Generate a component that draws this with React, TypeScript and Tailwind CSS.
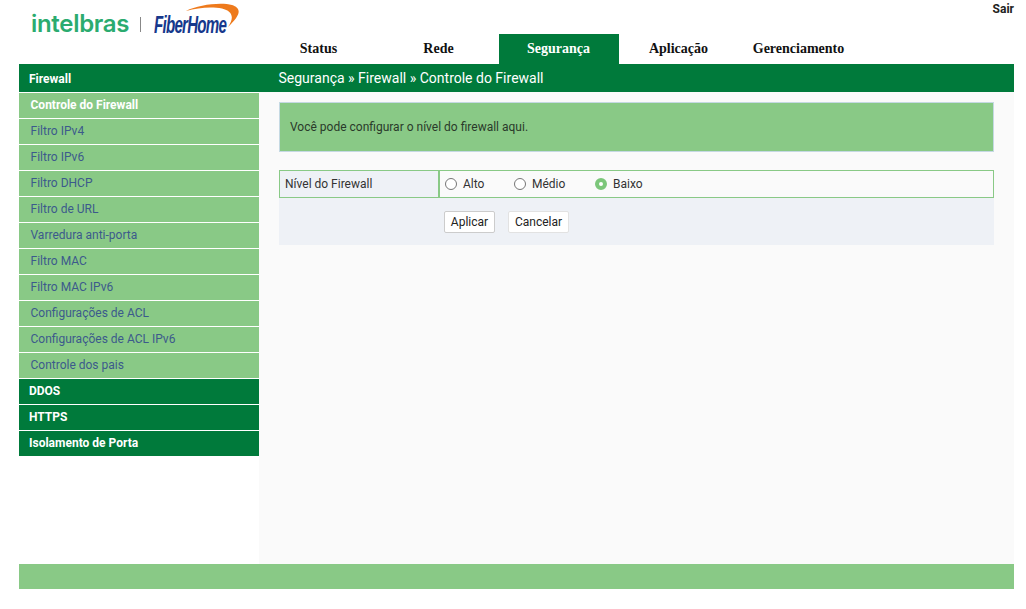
const tabs = ['Status', 'Rede', 'Segurança', 'Aplicação', 'Gerenciamento'];

const subItems = [
  'Controle do Firewall',
  'Filtro IPv4',
  'Filtro IPv6',
  'Filtro DHCP',
  'Filtro de URL',
  'Varredura anti-porta',
  'Filtro MAC',
  'Filtro MAC IPv6',
  'Configurações de ACL',
  'Configurações de ACL IPv6',
  'Controle dos pais',
];

const sections = ['DDOS', 'HTTPS', 'Isolamento de Porta'];

const levels = [
  { label: 'Alto', width: 'w-[69px]', checked: false },
  { label: 'Médio', width: 'w-[81px]', checked: false },
  { label: 'Baixo', width: 'w-[69px]', checked: true },
];

function Logo() {
  return (
    <div className="flex items-center h-[48px] pl-[12px] w-[240px]">
      <span className="font-['Inter',sans-serif] text-[24px] font-semibold leading-none tracking-[-0.3px] text-[#2bab6f]">intelbras</span>
      <span className="w-px h-[15px] bg-[#888] ml-[11px] mr-[13px] mt-[1px]"></span>
      <div className="relative w-[80px]">
        <span className="font-['Liberation_Sans',sans-serif] text-[24px] font-bold italic leading-none tracking-[-1.2px] text-[#16388c] block scale-x-[0.63] origin-left whitespace-nowrap mt-[1px]">FiberHome</span>
        <svg className="absolute left-[32px] top-[-9px]" width="56" height="26" viewBox="0 0 56 26">
          <path d="M0 8 C12 2 34 -1 46 2 C55 5 56 11 42 24 C49 14 46 8 36 5.5 C26 3.5 12 4.5 0 8 Z" fill="#ee7a1c" />
        </svg>
      </div>
    </div>
  );
}

export default function App() {
  return (
    <div className="w-[995px] ml-[19px] font-['Roboto',sans-serif] text-[12px]">
      <div className="h-[64px] flex relative">
        <Logo />
        <div className="flex items-end">
          {tabs.map((t) => (
            <div
              key={t}
              className={`w-[120px] h-[30px] flex items-center justify-center pb-[2px] pr-[1px] font-['Liberation_Serif',serif] font-bold text-[14px] ${t === 'Segurança' ? 'bg-[#007a3b] text-white' : 'text-[#111]'}`}
            >
              {t}
            </div>
          ))}
        </div>
        <a className="absolute right-0 top-0 font-bold text-[12px] text-[#222]">Sair</a>
      </div>

      <div className="flex">
        <div className="w-[240px] shrink-0">
          <div className="h-[29px] border-b border-white bg-[#007a3b] text-white font-bold flex items-center pl-[10px] pt-[1px]">Firewall</div>
          {subItems.map((s, i) => (
            <div
              key={s}
              className={`h-[26px] border-b border-white bg-[#89c986] flex items-center pl-[11.5px] pb-[1px] ${i === 0 ? 'text-white font-bold' : 'text-[#3c5a8c]'}`}
            >
              {s}
            </div>
          ))}
          {sections.map((s, i) => (
            <div
              key={s}
              className={`bg-[#007a3b] text-white font-bold flex items-center pl-[10px] pb-[1px] ${i < 2 ? 'h-[26px] border-b border-white' : 'h-[25px]'}`}
            >
              {s}
            </div>
          ))}
        </div>

        <div className="flex-1 flex flex-col">
          <div className="h-[28px] bg-[#007a3b] text-white text-[14px] flex items-center pl-[19.5px]">
            Segurança » Firewall » Controle do Firewall
          </div>
          <div className="h-[472px] bg-[#fafafa] pt-[10px] pl-[20px] pr-[20px]">
            <div className="h-[50px] bg-[#89c986] border border-[#c5d9e3] flex items-center pl-[10px] text-[#2a3a2a]">
              Você pode configurar o nível do firewall aqui.
            </div>
            <div className="mt-[18px] flex h-[28px]">
              <div className="w-[160px] bg-[#eef1f6] border border-[#89c986] flex items-center pl-[5px] text-[#333]">Nível do Firewall</div>
              <div className="flex-1 bg-[#fafafa] border border-[#89c986] flex items-center pl-[5px] text-[#333]">
                {levels.map((l) => (
                  <label key={l.label} className={`flex items-center ${l.width}`}>
                    <input
                      type="radio"
                      name="level"
                      defaultChecked={l.checked}
                      className="appearance-none w-[12px] h-[12px] rounded-full bg-white border border-[#767676] checked:border-[4px] checked:border-[#7cc67a] mr-[6px]"
                    />
                    {l.label}
                  </label>
                ))}
              </div>
            </div>
            <div className="h-[47px] bg-[#eef1f6] flex items-start pl-[165px] pt-[13px]">
              <button className="h-[22px] w-[51px] bg-white border border-[#ccc] rounded-[2px] text-[12px] text-[#222]">Aplicar</button>
              <button className="h-[22px] w-[61px] ml-[13px] bg-white border border-[#e2e2e2] rounded-[2px] text-[12px] text-[#222]">Cancelar</button>
            </div>
          </div>
        </div>
      </div>

      <div className="h-[25px] bg-[#89c986]"></div>
    </div>
  );
}
